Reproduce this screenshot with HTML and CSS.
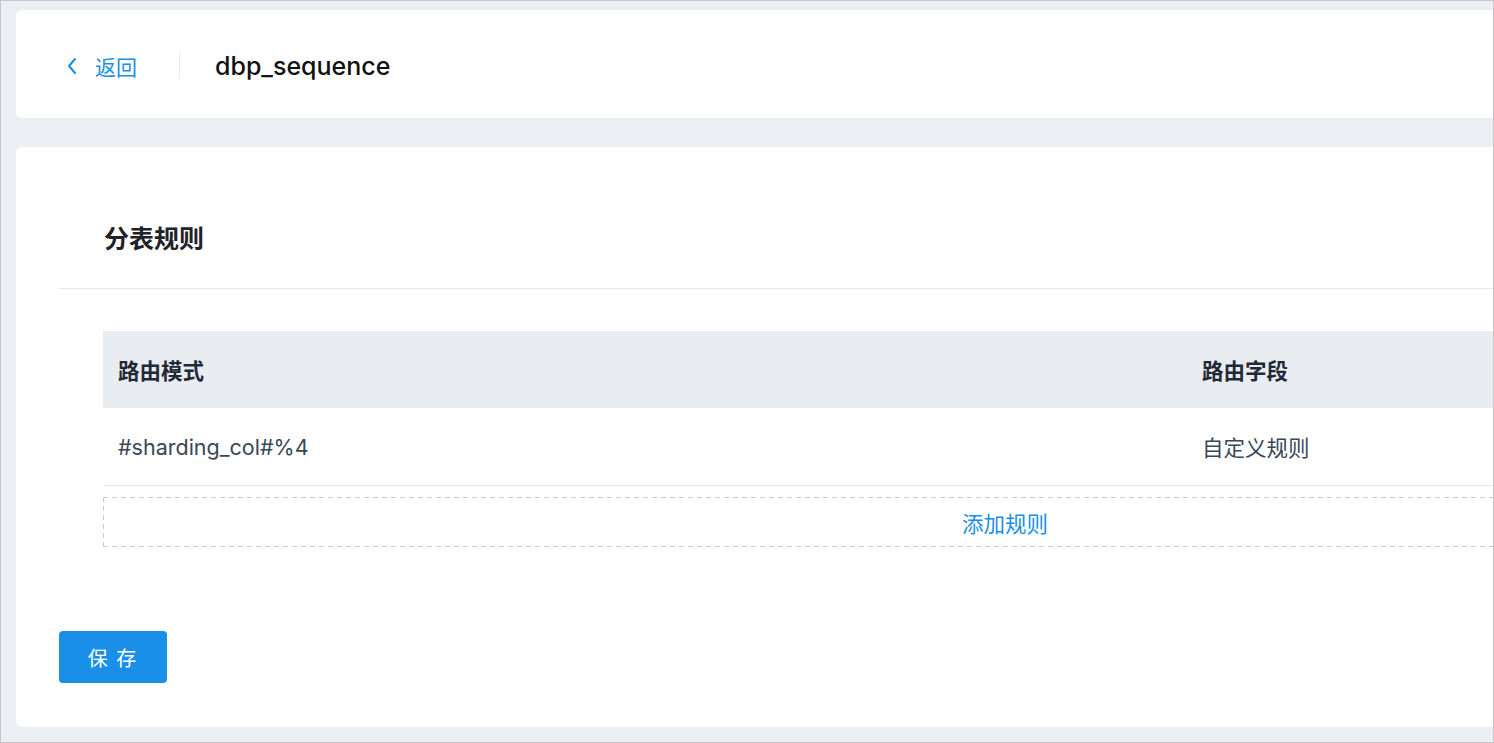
FILE: index.html
```html
<!DOCTYPE html>
<html lang="zh-CN">
    <head>
        <meta charset="UTF-8">
        <title>dbp_sequence</title>
        <link rel="stylesheet" href="styles.css">
    </head>
    <body>
        <div class="frame">
            <div class="page">
                <!-- 顶部 -->
                <div class="head_card">
                    <a class="back" href="#">
                        <svg class="back_icon" width="12" height="18" viewBox="0 0 12 18"><path d="M9 2 L3 9 L9 16" fill="none" stroke="#1a8fe3" stroke-width="2" stroke-linecap="round" stroke-linejoin="round"/></svg>
                        <span>返回</span>
                    </a>
                    <span class="head_line"></span>
                    <span class="head_title">dbp_sequence</span>
                </div>
                <!-- 分表规则 -->
                <div class="main_card">
                    <div class="sec_title">分表规则</div>
                    <div class="sec_line"></div>
                    <div class="rule_table">
                        <div class="tr th">
                            <div class="td col1">路由模式</div>
                            <div class="td col2">路由字段</div>
                        </div>
                        <div class="tr">
                            <div class="td col1">#sharding_col#%4</div>
                            <div class="td col2">自定义规则</div>
                        </div>
                    </div>
                    <div class="add_rule">添加规则</div>
                    <button class="save">保 存</button>
                </div>
            </div>
        </div>
    </body>
</html>
```

FILE: styles.css
```css
body{margin:0;font-family:Inter,"Noto Sans CJK SC",sans-serif;}
.frame{width:1494px;height:743px;box-sizing:border-box;border:1px solid #c6c6c6;background-color:#ebeef3;overflow:hidden;}
.page{width:1960px;padding:9px 0 0 15px;}
/* 顶部 */
.head_card{height:108px;box-sizing:border-box;padding-top:4px;background-color:white;border-radius:6px;display:flex;align-items:center;padding-left:50px;}
.back{display:flex;align-items:center;color:#1a8fe3;text-decoration:none;font-size:21px;}
.back_icon{margin-right:17px;}
.head_line{width:1px;height:26px;background-color:#e6e8eb;margin:0 35px 0 42px;}
.head_title{font-size:25px;font-weight:500;color:#111;}
/* 分表规则 */
.main_card{margin-top:29px;height:580px;background-color:white;border-radius:6px;padding-left:43px;box-sizing:border-box;}
.sec_title{padding:77px 0 33px 45px;font-size:25px;line-height:31px;font-weight:600;color:#1f2329;}
.sec_line{border-top:1px solid #e4e7eb;}
.rule_table{margin:42px 0 0 44px;width:1804px;}
.tr{display:flex;height:77px;align-items:center;border-bottom:1px solid #e5e7ea;font-size:21.5px;color:#3a4756;}
.th{background-color:#e9ecf0;border-bottom:none;font-weight:600;color:#1f2a36;}
.td{padding-left:15px;box-sizing:border-box;}
.col1{width:1084px;}
.col2{flex:1;}
/* 点線の枠 */
.add_rule{margin:11px 0 0 44px;width:1804px;height:50px;display:flex;align-items:center;justify-content:center;font-size:21.5px;color:#1a8fe3;
    background:
        linear-gradient(90deg,#c8cacd 55%,transparent 55%) top left/9px 1px repeat-x,
        linear-gradient(90deg,#c8cacd 55%,transparent 55%) bottom left/9px 1px repeat-x,
        linear-gradient(180deg,#c8cacd 55%,transparent 55%) top left/1px 9px repeat-y,
        linear-gradient(180deg,#c8cacd 55%,transparent 55%) top right/1px 9px repeat-y;}
.save{display:block;margin-top:84px;width:108px;height:52px;border:none;border-radius:4px;background-color:#1a8fe8;color:white;font-size:20px;font-family:"Noto Sans CJK SC",sans-serif;letter-spacing:2px;}
```
